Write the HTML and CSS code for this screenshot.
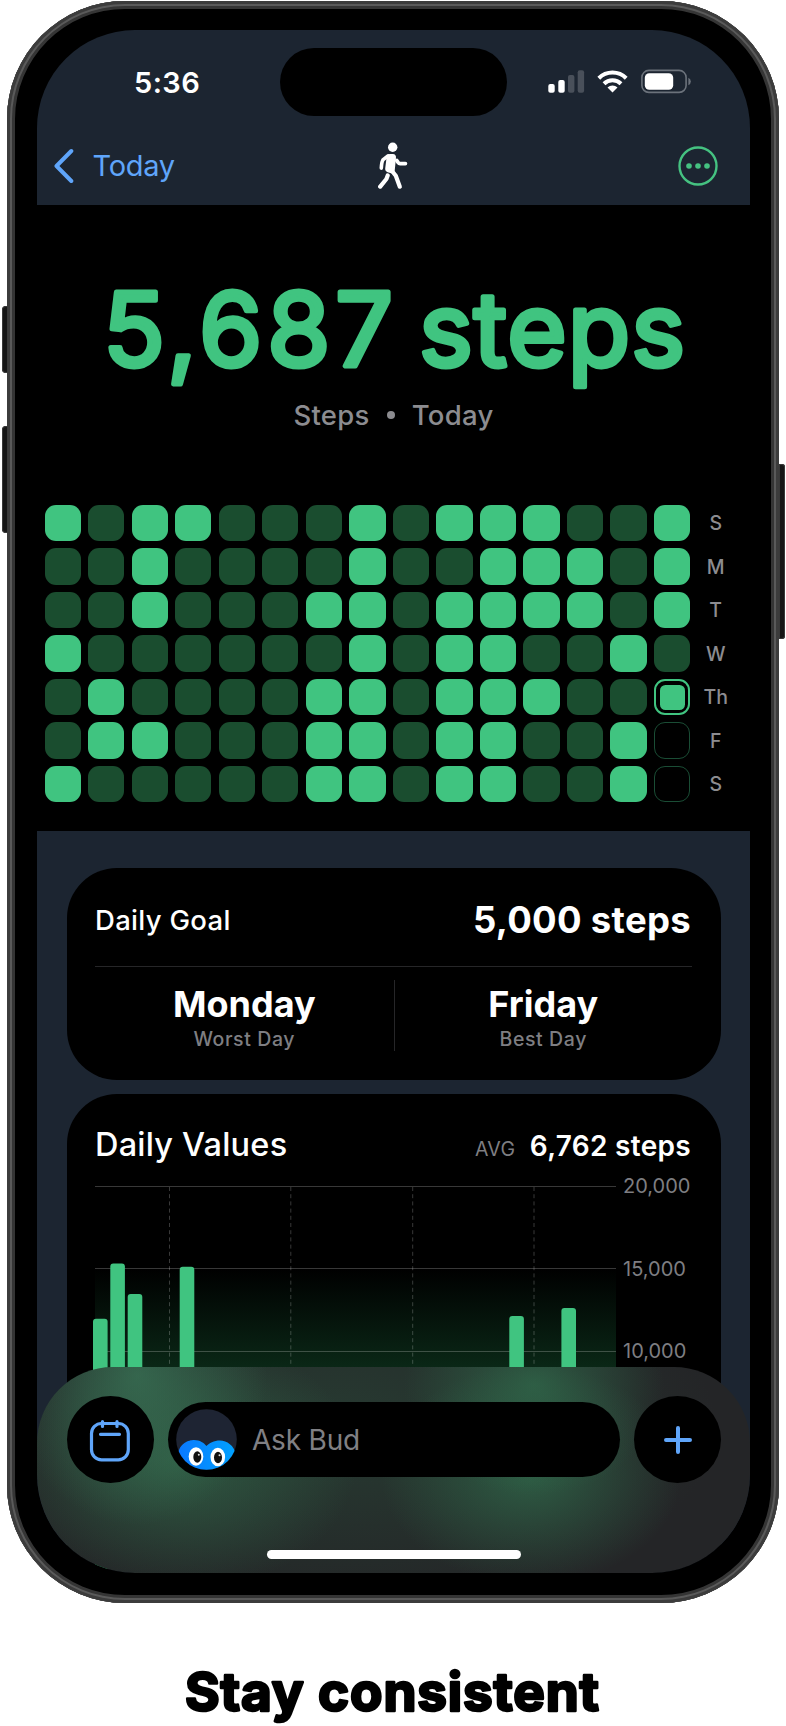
FILE: index.html
```html
<!DOCTYPE html>
<html lang="en">
<head>
    <meta charset="UTF-8">
    <meta name="viewport" content="width=device-width, initial-scale=1.0">
    <title>Stay consistent</title>
    <link rel="stylesheet" href="styles.css">
</head>
<body>
    <div class="phone">
        <span class="side-btn vol-up"></span>
        <span class="side-btn vol-down"></span>
        <span class="side-btn power"></span>

        <div class="screen">
            <header class="header">
                <div class="status">
                    <span class="time">5:36</span>
                    <span class="island"></span>
                    <svg class="status-icons" width="144" height="26" viewBox="548 69 144 26">
                        <g fill="#fff">
                            <rect x="548.3" y="84" width="6.4" height="8.7" rx="2"/>
                            <rect x="558.3" y="80" width="6.4" height="12.7" rx="2"/>
                            <rect x="568" y="75" width="6.4" height="17.7" rx="2" opacity=".2"/>
                            <rect x="577.7" y="70.3" width="6.4" height="22.4" rx="2" opacity=".2"/>
                        </g>
                        <g fill="none" stroke="#fff" stroke-width="4">
                            <path d="M598.8 78.2a19.6 19.6 0 0 1 27.4 0"/>
                            <path d="M604 83.8a12.2 12.2 0 0 1 17 0"/>
                        </g>
                        <path d="M612.5 92.6l-5-5a7.2 7.2 0 0 1 10 0z" fill="#fff"/>
                        <rect x="641.9" y="70.4" width="44.2" height="22" rx="7" fill="none" stroke="#6b727b" stroke-width="1.6"/>
                        <rect x="644.8" y="73.2" width="28.4" height="16.6" rx="4.5" fill="#fff"/>
                        <path d="M688.4 77.8q2.4 1 2.4 3.7t-2.4 3.7z" fill="#6b727b"/>
                    </svg>
                </div>
                <nav class="nav">
                    <a class="back">
                        <svg width="20" height="36" viewBox="0 0 20 36" fill="none" stroke="#5fa5fa" stroke-width="4" stroke-linecap="round" stroke-linejoin="round">
                            <path d="M17.3 3L2.5 18l14.8 15"/>
                        </svg>
                        <span>Today</span>
                    </a>
                    <svg class="walk" width="30" height="48" viewBox="378 142 30 48" fill="none" stroke="#fff" stroke-linecap="round" stroke-linejoin="round">
                        <circle cx="392.7" cy="147.2" r="4.7" fill="#fff" stroke="none"/>
                        <path d="M390.1 157.4l-1.4 11.4 2.6.8 1.2-12z" stroke-width="7"/>
                        <path d="M388 155.8l-4.8 3.8q-1.500 1.600-1.900 8.600" stroke-width="3.600"/>
                        <path d="M396.800 160.500l1.500 2.200q.6.9 1.800.9h5.300" stroke-width="3.800"/>
                        <path d="M392 171l3.800 4.800 4 10.900" stroke-width="4.200"/>
                        <path d="M387.700 175.500l-1.300 3.500-6.200 7.600" stroke-width="4.200"/>
                    </svg>
                    <svg class="more" width="40" height="40" viewBox="0 0 40 40">
                        <circle cx="20" cy="20" r="18.5" fill="none" stroke="#45c281" stroke-width="2.4"/>
                        <g fill="#45c281"><circle cx="11" cy="20" r="2.8"/><circle cx="20" cy="20" r="2.8"/><circle cx="29" cy="20" r="2.8"/></g>
                    </svg>
                </nav>
            </header>

            <section class="summary">
                <svg class="total" width="713" height="140" viewBox="37 265 713 140">
                    <text y="366"><tspan x="103" textLength="290" lengthAdjust="spacing">5,687</tspan> <tspan x="419" textLength="266" lengthAdjust="spacing">steps</tspan></text>
                </svg>
                <p class="subtitle"><span>Steps</span><i></i><span>Today</span></p>
                <div class="heatmap" id="heatmap"></div>
            </section>

            <main class="content">
                <section class="card goal">
                    <div class="goal-row">
                        <span class="goal-label">Daily Goal</span>
                        <span class="goal-value">5,000 steps</span>
                    </div>
                    <div class="days">
                        <div class="day"><b>Monday</b><small>Worst Day</small></div>
                        <div class="day"><b>Friday</b><small>Best Day</small></div>
                    </div>
                </section>

                <section class="card values">
                    <div class="values-head">
                        <h2>Daily Values</h2>
                        <p><small>AVG</small><b>6,762 steps</b></p>
                    </div>
                    <svg class="chart" width="620" height="406" viewBox="92 1170 620 406">
                        <defs>
                            <linearGradient id="fade" x1="0" y1="0" x2="0" y2="1">
                                <stop offset="0" stop-color="#2fb868" stop-opacity="0"/>
                                <stop offset="1" stop-color="#2fb868" stop-opacity=".65"/>
                            </linearGradient>
                        </defs>
                        <rect x="95" y="1269" width="521" height="300" fill="url(#fade)"/>
                        <path class="grid" d="M95 1186.5H616M95 1268.5H616M95 1351.5H616"/>
                        <path class="grid dashed" d="M169.5 1187V1400M290.8 1187V1400M412.7 1187V1400M534 1187V1400"/>
                        <g class="bars">
                            <rect x="93" y="1318.7" width="14.6" height="240" rx="3"/>
                            <rect x="110.3" y="1263.5" width="14.6" height="240" rx="3"/>
                            <rect x="127.7" y="1294" width="14.6" height="240" rx="3"/>
                            <rect x="179.7" y="1266.7" width="14.6" height="240" rx="3"/>
                            <rect x="509.3" y="1316" width="14.6" height="240" rx="3"/>
                            <rect x="561.4" y="1308" width="14.6" height="240" rx="3"/>
                        </g>
                        <g class="axis">
                            <text x="623" y="1193">20,000</text>
                            <text x="623" y="1276">15,000</text>
                            <text x="623" y="1358">10,000</text>
                        </g>
                    </svg>
                </section>
            </main>

            <footer class="dock">
                <div class="dock-row">
                    <button class="round">
                        <svg width="44" height="44" viewBox="88 1416 44 44" fill="none" stroke="#5fa5fa" stroke-width="3.2" stroke-linecap="round">
                            <rect x="91.5" y="1421.5" width="36.8" height="36.3" rx="10"/>
                            <path d="M102.5 1419.5v5M117 1419.5v5M100.5 1432.3h19"/>
                        </svg>
                    </button>
                    <div class="ask">
                        <svg class="bud" width="61" height="61" viewBox="0 0 61 61">
                            <defs>
                                <clipPath id="face"><circle cx="30.5" cy="30.5" r="30.3"/></clipPath>
                                <linearGradient id="blue"><stop offset="0" stop-color="#0a78ff"/><stop offset="1" stop-color="#00a2ff"/></linearGradient>
                            </defs>
                            <g clip-path="url(#face)">
                                <rect width="61" height="61" fill="#1e2433"/>
                                <path d="M2 46C3 34 13 31 18 31c6 0 10 3 12.5 6C33 34 38 31.5 44 31.5c7 0 14 5 16 14V61H2z" fill="url(#blue)"/>
                                <ellipse cx="20" cy="47.5" rx="7.3" ry="9.3" fill="#fff"/>
                                <ellipse cx="41.8" cy="48" rx="7.3" ry="9.3" fill="#fff"/>
                                <ellipse cx="21.3" cy="48" rx="4" ry="5.7" fill="#111"/>
                                <ellipse cx="42" cy="48.5" rx="4" ry="5.7" fill="#111"/>
                                <circle cx="22.8" cy="45.8" r="1" fill="#ddd"/>
                                <circle cx="43.5" cy="46.3" r="1" fill="#ddd"/>
                            </g>
                        </svg>
                        <span>Ask Bud</span>
                    </div>
                    <button class="round">
                        <svg width="30" height="30" viewBox="0 0 30 30" stroke="#5fa5fa" stroke-width="4" stroke-linecap="round">
                            <path d="M15 3v24M3 15h24"/>
                        </svg>
                    </button>
                </div>
                <span class="home"></span>
            </footer>
        </div>
    </div>

    <svg class="caption" width="786" height="90" viewBox="0 1636 786 90">
        <text x="185" y="1711" textLength="414" lengthAdjust="spacing">Stay consistent</text>
    </svg>

    <script>
        // 1 = goal reached, 0 = missed, t = today, - = still to come
        const days = [
            ["S",  "101100010111001"],
            ["M",  "001000010011101"],
            ["T",  "001000110111101"],
            ["W",  "100000010110010"],
            ["Th", "01000011011100t"],
            ["F",  "01100011011001-"],
            ["S",  "10000011011001-"]
        ];
        const kinds = { "1": "done", "0": "missed", "t": "today", "-": "future" };
        const heatmap = document.getElementById("heatmap");

        days.forEach(function (day) {
            day[1].split("").forEach(function (c) {
                const cell = document.createElement("span");
                cell.className = "cell " + kinds[c];
                heatmap.appendChild(cell);
            });
            const label = document.createElement("span");
            label.className = "weekday";
            label.textContent = day[0];
            heatmap.appendChild(label);
        });
    </script>
</body>
</html>
```
FILE: styles.css
```css
* {
    box-sizing: border-box;
}

body {
    margin: 0;
    width: 786px;
    height: 1726px;
    overflow: hidden;
    background: #fff;
    font-family: Inter, "Liberation Sans", sans-serif;
    color: #fff;
}

p, h2 {
    margin: 0;
}

/* Phone frame */
.phone {
    position: relative;
    width: 772px;
    height: 1602px;
    margin: 1px 0 0 7px;
    padding: 29px 29px 30px 30px;
    border-radius: 118px;
    background: #000;
    box-shadow: inset 0 0 0 3px #3c3c3c, inset 0 0 0 5px #5a5a5a, inset 0 0 0 8px #353535;
}

.side-btn {
    position: absolute;
    width: 6px;
    background: #161616;
    box-shadow: inset 0 0 0 1px #3a3a3a;
}

.vol-up {
    left: -5px;
    top: 305px;
    height: 67px;
    border-radius: 4px 0 0 4px;
}

.vol-down {
    left: -5px;
    top: 425px;
    height: 107px;
    border-radius: 4px 0 0 4px;
}

.power {
    right: -6px;
    top: 463px;
    height: 175px;
    border-radius: 0 3px 3px 0;
}

.screen {
    position: relative;
    height: 1543px;
    overflow: hidden;
    border-radius: 98px;
    background: #1c2531;
}

/* Status bar and navigation */
.header {
    height: 175px;
    padding-top: 18px;
}

.status {
    display: grid;
    grid-template-columns: 243px 227px 1fr;
    align-items: center;
    height: 68px;
}

.time {
    padding-left: 97px;
    font-size: 29px;
    font-weight: 600;
    letter-spacing: 0.4px;
}

.island {
    height: 68px;
    border-radius: 34px;
    background: #000;
}

.status-icons {
    margin-left: 41px;
}

.nav {
    display: grid;
    grid-template-columns: 1fr auto 1fr;
    align-items: center;
    height: 99px;
    padding: 0 32px 0 16.5px;
}

.back {
    display: flex;
    align-items: center;
    gap: 19px;
    font-size: 29px;
    letter-spacing: -0.3px;
    color: #5fa5fa;
}

.walk {
    margin-left: 15px;
}

.more {
    justify-self: end;
}

/* Step total */
.summary {
    height: 626px;
    padding-top: 60px;
    background: #000;
}

.total {
    display: block;
}

.total text {
    font-size: 102px;
    font-weight: 400;
    fill: #40c480;
    stroke: #40c480;
    stroke-width: 5px;
    stroke-linejoin: round;
}

.subtitle {
    display: flex;
    justify-content: center;
    align-items: center;
    gap: 17px;
    height: 30px;
    margin-top: -5px;
    font-size: 27.5px;
    font-weight: 500;
    letter-spacing: 0.3px;
    color: #8c8c90;
}

.subtitle i {
    width: 8px;
    height: 8px;
    border-radius: 50%;
    background: #8c8c90;
}

.heatmap {
    display: grid;
    grid-template-columns: repeat(15, 36.3px) 1fr;
    gap: 7.2px 7.24px;
    margin: 75px 7px 0 7.5px;
}

.cell {
    height: 36.3px;
    border-radius: 11px;
}

.done {
    background: #40c480;
}

.missed {
    background: #1a4d2f;
}

.today {
    border: 2px solid #40c480;
    padding: 3.5px;
    background: #40c480 content-box;
}

.future {
    border: 1.5px solid #1a4d35;
}

.weekday {
    align-self: center;
    margin-right: 9px;
    text-align: center;
    font-size: 19.5px;
    font-weight: 500;
    color: #8c8c90;
}

/* Cards */
.content {
    display: flex;
    flex-direction: column;
    gap: 14px;
    padding: 36.5px 29.5px 0;
}

.card {
    border-radius: 50px;
    background: #000;
    padding: 0 28.5px;
}

.goal {
    height: 212.5px;
}

.goal-row {
    display: flex;
    justify-content: space-between;
    align-items: center;
    height: 99px;
    padding: 6px 1px 0 0;
    border-bottom: 1px solid #262628;
}

.goal-label {
    font-size: 27.5px;
    font-weight: 500;
    letter-spacing: 0.3px;
}

.goal-value {
    font-size: 36.5px;
    font-weight: 700;
    letter-spacing: 0.3px;
}

.days {
    display: grid;
    grid-template-columns: 1fr 1fr;
    margin-top: 13px;
}

.day {
    display: flex;
    flex-direction: column;
    align-items: center;
    height: 71px;
}

.day + .day {
    border-left: 1px solid #262628;
}

.day b {
    font-size: 36px;
    font-weight: 700;
    letter-spacing: 0;
    line-height: 48px;
}

.day small {
    font-size: 19.5px;
    font-weight: 500;
    letter-spacing: 0.6px;
    line-height: 22px;
    color: #7e7e82;
}

.values {
    height: 600px;
}

.values-head {
    display: flex;
    justify-content: space-between;
    align-items: baseline;
    height: 75.5px;
    padding: 31px 1px 0 0;
}

.values-head h2 {
    font-size: 32.5px;
    font-weight: 500;
    letter-spacing: 0.2px;
}

.values-head small {
    margin-right: 14.5px;
    font-size: 19.5px;
    letter-spacing: 0.3px;
    color: #7e7e82;
}

.values-head b {
    font-size: 28px;
    font-weight: 600;
    letter-spacing: 0.3px;
}

.chart {
    display: block;
    margin-left: -3px;
    overflow: visible;
}

.grid {
    fill: none;
    stroke: #fff;
    stroke-opacity: .22;
}

.dashed {
    stroke-dasharray: 4 3.2;
}

.bars {
    fill: #40c480;
}

.axis {
    font-size: 20px;
    fill: #7e7e82;
}

/* Bottom bar */
.dock {
    position: absolute;
    left: 0;
    right: 0;
    bottom: 0;
    height: 206px;
    padding-top: 29px;
    border-radius: 76px 76px 98px 98px;
    background:
        radial-gradient(ellipse 130px 150px at 100px 8px, rgba(60, 125, 92, .65), transparent),
        radial-gradient(ellipse 180px 130px at 140px 95px, rgba(52, 115, 80, .6), transparent),
        radial-gradient(ellipse 130px 110px at 497px 18px, rgba(50, 115, 80, .65), transparent),
        radial-gradient(ellipse 150px 110px at 494px 108px, rgba(50, 115, 80, .65), transparent),
        radial-gradient(ellipse 380px 190px at 300px 60px, rgba(42, 80, 60, .5), transparent),
        #242527;
}

.dock-row {
    display: flex;
    align-items: center;
    gap: 14.5px;
    padding: 0 29px 0 29.5px;
}

.round {
    display: flex;
    justify-content: center;
    align-items: center;
    width: 87px;
    height: 87px;
    padding: 0;
    border: none;
    border-radius: 50%;
    background: #000;
}

.ask {
    display: flex;
    flex: 1;
    align-items: center;
    gap: 15.5px;
    height: 75px;
    padding-left: 7.5px;
    border-radius: 38px;
    background: #000;
    font-size: 28px;
    letter-spacing: -0.2px;
    color: #808084;
}

.home {
    display: block;
    width: 254px;
    height: 9px;
    margin: 67px auto 0;
    border-radius: 5px;
    background: #fff;
}

.caption {
    display: block;
    margin-top: 33px;
}

.caption text {
    font-size: 53px;
    font-weight: 700;
    stroke: #000;
    stroke-width: 2.6px;
    stroke-linejoin: round;
}
```
